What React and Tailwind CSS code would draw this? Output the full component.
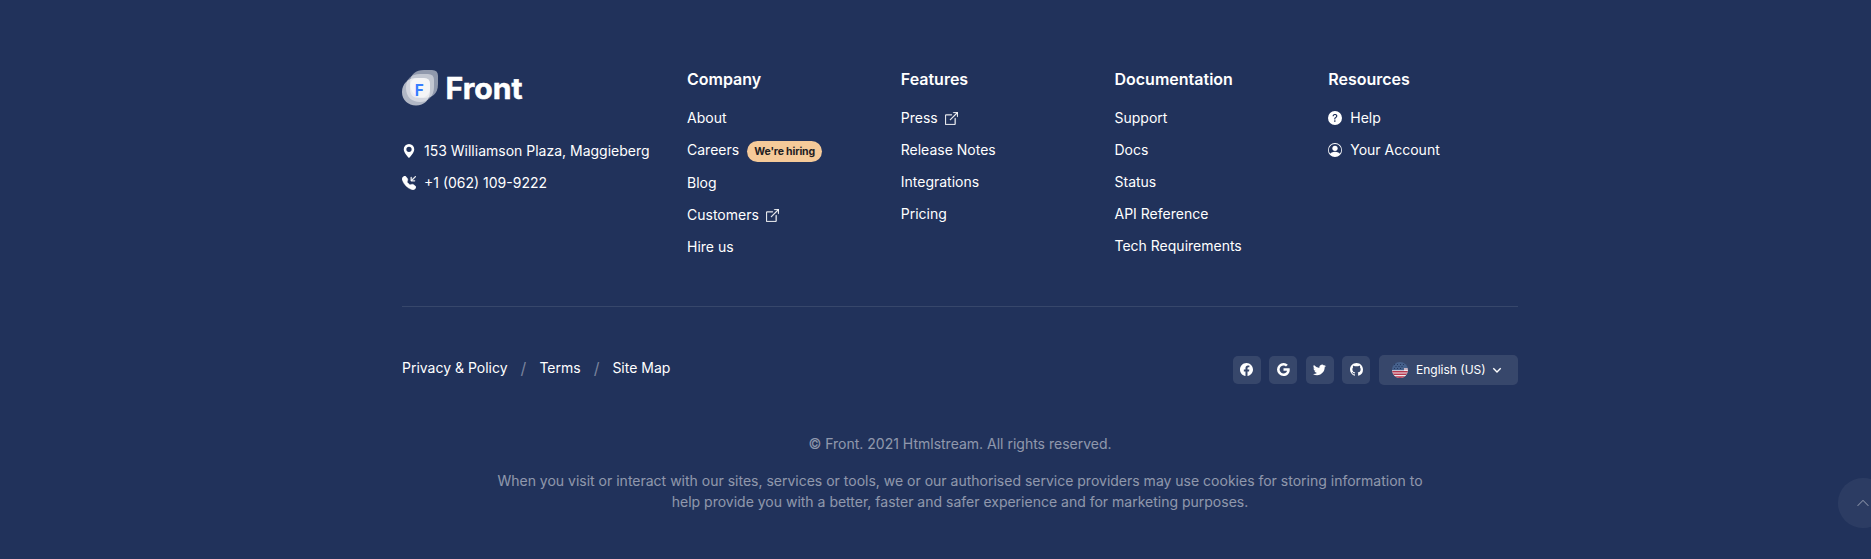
import React from "react";
import {
  BsGeoAltFill, BsTelephoneInboundFill, BsBoxArrowUpRight, BsQuestionCircleFill,
  BsPersonCircle, BsFacebook, BsGoogle, BsTwitter, BsGithub, BsChevronUp,
} from "react-icons/bs";

const columns = [
  { title: "Company", links: [
    { label: "About" }, { label: "Careers", badge: "We're hiring" }, { label: "Blog" },
    { label: "Customers", external: true }, { label: "Hire us" } ] },
  { title: "Features", links: [
    { label: "Press", external: true }, { label: "Release Notes" }, { label: "Integrations" }, { label: "Pricing" } ] },
  { title: "Documentation", links: [
    { label: "Support" }, { label: "Docs" }, { label: "Status" }, { label: "API Reference" }, { label: "Tech Requirements" } ] },
  { title: "Resources", links: [
    { label: "Help", icon: BsQuestionCircleFill }, { label: "Your Account", icon: BsPersonCircle } ] },
];

function Logo() {
  return (
    <svg className="block h-9 w-[122px]" viewBox="0 0 122 36" aria-label="Front">
      <path d="M22 0H30Q36 0 36 6V14C36 24 30 28 22 28S8 22 8 13S14 0 22 0Z" fill="#fff" fillOpacity=".5" />
      <path d="M18 4H26Q32 4 32 10V17C32 26 26 32 18 32S4 27 4 18S9 4 18 4Z" fill="#fff" fillOpacity=".45" />
      <path d="M14 8H22Q28 8 28 14V21C28 30 22 35.500 14 35.500S0 30 0 22S6 8 14 8Z" fill="#fff" fillOpacity=".65" />
      <path d="M16 8H22Q28 8 28 14V18C28 25 23 28 17 28S8 25 8 18S11 8 16 8Z" fill="#fff" fillOpacity=".5" />
      <text x="12.800" y="26" fontFamily="Inter, sans-serif" fontSize="16.500" fontWeight="700" fill="#377dff" textLength="9" lengthAdjust="spacingAndGlyphs">F</text>
      <text x="43.600" y="29.200" fontFamily="Inter, sans-serif" fontSize="29.500" fontWeight="700" fill="#fff" stroke="#fff" strokeWidth=".5" textLength="77" lengthAdjust="spacingAndGlyphs">Front</text>
    </svg>
  );
}

function Flag() {
  return (
    <svg className="h-4 w-4" viewBox="0 0 16 16">
      <defs><clipPath id="flag"><circle cx="8" cy="8" r="8" /></clipPath></defs>
      <g clipPath="url(#flag)">
        <path d="M0 8h16v8H0z" fill="#eee9ee" />
        <path d="M12 6h4v2h-4z" fill="#c9b6c4" />
        <path d="M0 9h16v1.400H0zM0 11.600h16v1.300H0zM0 14.200h16v1.800H0z" fill="#b8384e" />
        <path d="M0 0h16v6H12v2.300H0z" fill="#46618c" />
        <path d="M2 2h1v1H2zM5 2h1v1H5zM8 2h1v1H8zM11 2h1v1h-1zM3.500 4h1v1h-1zM6.500 4h1v1h-1zM9.500 4h1v1h-1zM2 6h1v1H2zM5 6h1v1H5zM8 6h1v1H8z" fill="#23365f" />
      </g>
    </svg>
  );
}

function FooterLink({ link }) {
  const Icon = link.icon;
  return (
    <li className={link.badge ? "flex h-[33px] items-start" : "flex h-8 items-start"}>
      <a href="#" className="flex h-[21px] items-center">
        {Icon && <Icon className="mr-2 h-3.5 w-3.5" />}
        {link.label}
        {link.external && <BsBoxArrowUpRight className="ml-[7px] h-[13px] w-[13px] translate-y-px" strokeWidth="0.4" />}
        {link.badge && (
          <span className="ml-2 flex h-[21px] w-[75px] translate-y-0.5 items-center justify-center rounded-full bg-[#f5ca99] text-[10.500px] font-bold tracking-[-0.150px] whitespace-nowrap text-[#1e2022]">{link.badge}</span>
        )}
      </a>
    </li>
  );
}

export default function App() {
  return (
    <footer className="relative h-[559px] w-full overflow-hidden bg-[#21325b] font-[Inter,sans-serif] text-sm text-white">
      <div className="ml-[402px] w-[1116px] pt-[69px]">
        <div className="flex h-[238px] border-b border-white/10">
          <div className="w-[285px] shrink-0 pt-px">
            <Logo />
            <ul className="mt-[34px]">
              <li className="flex h-8 items-start"><a href="#" className="flex h-[21px] items-center"><BsGeoAltFill className="mr-2 h-3.5 w-3.5" />153 Williamson Plaza, Maggieberg</a></li>
              <li className="flex h-8 items-start"><a href="#" className="flex h-[21px] items-center"><BsTelephoneInboundFill className="mr-2 h-3.5 w-3.5" strokeWidth="0.4" />+1 (062) 109-9222</a></li>
            </ul>
          </div>
          {columns.map((c) => (
            <div key={c.title} className="w-[213.750px] shrink-0">
              <h5 className="text-base leading-5 font-semibold">{c.title}</h5>
              <ul className="mt-[18px]">{c.links.map((l) => <FooterLink key={l.label} link={l} />)}</ul>
            </div>
          ))}
        </div>
        <div className="mt-12 flex h-[32px] items-start justify-between">
          <div className="flex h-[26px] items-center">
            <a href="#">Privacy &amp; Policy</a>
            <span className="mx-[13px] text-base text-white/40">/</span>
            <a href="#">Terms</a>
            <span className="mx-[13px] text-base text-white/40">/</span>
            <a href="#">Site Map</a>
          </div>
          <div className="flex items-center">
            <div className="mr-[9px] flex gap-[8.400px]">
              {[BsFacebook, BsGoogle, BsTwitter, BsGithub].map((Icon, i) => (
                <a key={i} href="#" className="flex h-7 w-7 items-center justify-center rounded-[5px] bg-white/10"><Icon className="h-[13px] w-[13px] -translate-y-px" /></a>
              ))}
            </div>
            <button className="flex h-[30px] w-[139px] items-center rounded-[5px] bg-white/10 pl-[13px] text-xs">
              <Flag />
              <span className="ml-2">English (US)</span>
              <svg className="ml-[6px] h-2.5 w-2.5" viewBox="0 0 10 10" fill="none" stroke="currentColor" strokeWidth="1.400"><path d="M1.300 3.300 5 7l3.700-3.700" /></svg>
            </button>
          </div>
        </div>
        <div className="mx-auto mt-[46px] w-[930px] text-center leading-[21px] text-white/50">
          <p>© Front. 2021 Htmlstream. All rights reserved.</p>
          <p className="mt-4">When you visit or interact with our sites, services or tools, we or our authorised service providers may use cookies for storing information to help provide you with a better, faster and safer experience and for marketing purposes.</p>
        </div>
      </div>
      <a href="#" className="absolute top-[478px] left-[1838px] flex h-[50px] w-[50px] items-center justify-center rounded-full bg-white/5 text-white/40"><BsChevronUp className="h-3.5 w-3.5" /></a>
    </footer>
  );
}
